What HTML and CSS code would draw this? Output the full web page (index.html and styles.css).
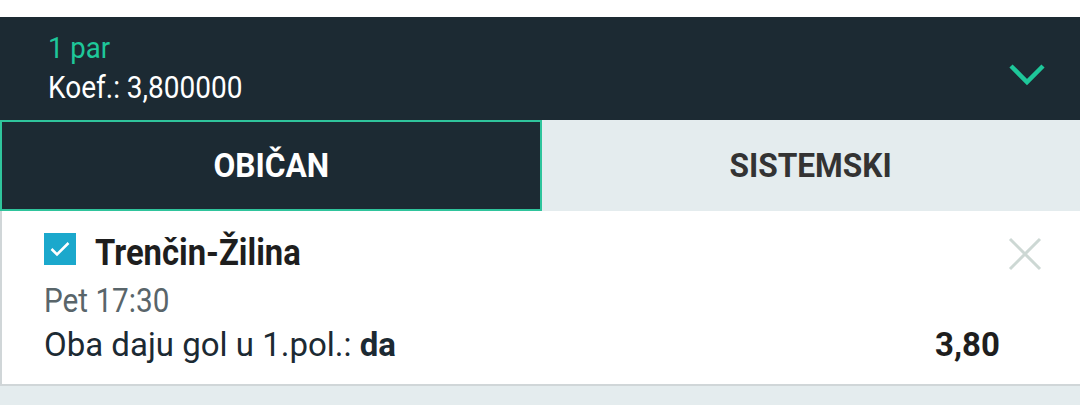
FILE: index.html
```html
<!DOCTYPE html>
<html lang="sr">
<head>
    <meta charset="UTF-8">
    <meta name="viewport" content="width=device-width, initial-scale=1.0">
    <title>Tiket</title>
    <link rel="stylesheet" href="styles.css">
</head>
<body>
    <header class="summary">
        <div class="summary-text">
            <p class="pairs">1 par</p>
            <p class="odds">Koef.: 3,800000</p>
        </div>
        <svg class="chevron" width="36" height="24" viewBox="0 0 36 24">
            <path d="M2 3 L18 19 L34 3" fill="none" stroke="#1ec79a" stroke-width="4.5"/>
        </svg>
    </header>
    <nav class="tabs">
        <button class="tab active"><span>OBIČAN</span></button>
        <button class="tab"><span>SISTEMSKI</span></button>
    </nav>
    <section class="bet">
        <div class="bet-head">
            <span class="check">
                <svg width="32" height="32" viewBox="0 0 32 32">
                    <path d="M7.5 16 L13 21.5 L24.5 10" fill="none" stroke="#fff" stroke-width="2.5"/>
                </svg>
            </span>
            <h2 class="match">Trenčin-Žilina</h2>
            <svg class="close" width="34" height="34" viewBox="0 0 34 34">
                <path d="M2 2 L32 32 M32 2 L2 32" stroke="#cdd8d4" stroke-width="3"/>
            </svg>
        </div>
        <p class="time">Pet 17:30</p>
        <div class="bet-row">
            <p class="pick">Oba daju gol u 1.pol.: <b>da</b></p>
            <span class="price">3,80</span>
        </div>
    </section>
</body>
</html>
```

FILE: styles.css
```css
* {
    font-family: Roboto, "Noto Sans", sans-serif;
    box-sizing: border-box;
    margin: 0;
    padding: 0;
}

body {
    background-color: #e4ecee;
    padding-top: 17px;
    background-image: linear-gradient(#fff 17px, transparent 17px);
    background-repeat: no-repeat;
}

/* cabecalho escuro */
.summary {
    height: 103px;
    background-color: #1c2a33;
    display: flex;
    align-items: flex-start;
    justify-content: space-between;
    padding: 13px 35px 0 48px;
}

.pairs {
    color: #1ec79a;
    font-size: 29px;
    line-height: 36px;
    transform: scaleX(0.95);
    transform-origin: left center;
}

.odds {
    color: #fff;
    font-size: 32px;
    line-height: 40px;
    margin-top: 1px;
    transform: scaleX(0.875);
    transform-origin: left center;
}

.chevron {
    align-self: center;
}

/* abas */
.tabs {
    display: flex;
    height: 91px;
}

.tab {
    flex: 1;
    border: none;
    background-color: #e4ecee;
    color: #333;
    font-size: 33px;
    cursor: pointer;
}

.tab span {
    display: inline-block;
    font-weight: bold;
    transform: scaleX(0.96);
}

.tab.active {
    background-color: #1c2a33;
    color: #fff;
    border: 2px solid #2fc49c;
}

/* aposta */
.bet {
    background-color: #fff;
    border-left: 2px solid #d0d6d8;
    border-bottom: 2px solid #d0d6d8;
    padding: 22px 38px 19px 42px;
}

.bet-head {
    display: flex;
    align-items: flex-start;
}

.check {
    width: 32px;
    height: 32px;
    background-color: #1ba8cc;
    display: flex;
}

.match {
    font-size: 36px;
    line-height: 32px;
    font-weight: bold;
    color: #1e1e1e;
    margin: 4px 0 0 19px;
    transform: scaleX(0.91);
    transform-origin: left center;
}

.close {
    margin: 4px 0 0 auto;
}

.time {
    font-size: 33px;
    line-height: 38px;
    color: #59656a;
    margin-top: 11px;
    transform: scaleX(0.9);
    transform-origin: left center;
}

.bet-row {
    display: flex;
    justify-content: space-between;
    align-items: baseline;
    margin-top: 4px;
    padding-right: 42px;
}

.pick {
    font-size: 33px;
    line-height: 40px;
    color: #1c2a33;
}

.pick b {
    font-weight: bold;
}

.price {
    font-size: 34px;
    font-weight: bold;
    color: #1e1e1e;
    transform: scaleX(0.97);
    transform-origin: right center;
}
```
